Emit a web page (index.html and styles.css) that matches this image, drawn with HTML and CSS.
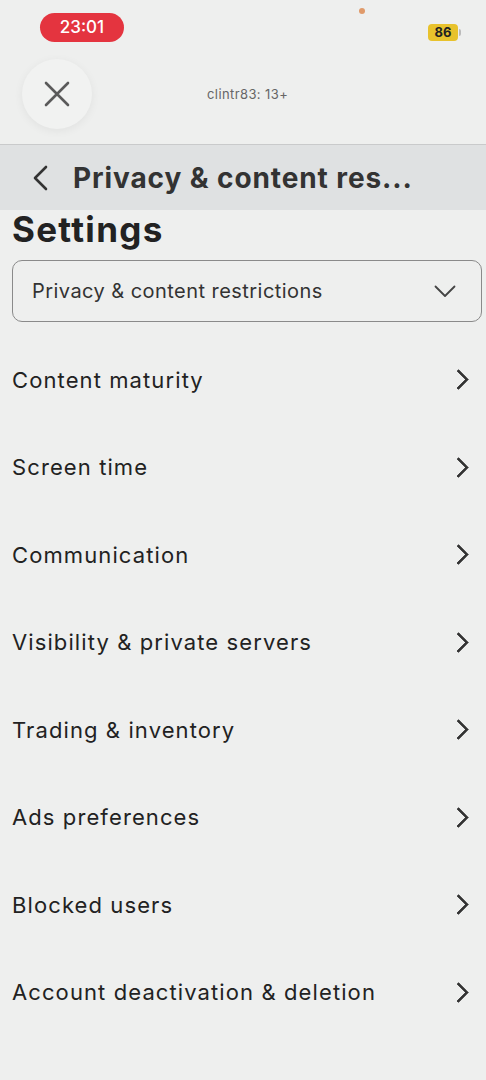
FILE: index.html
```html
<!DOCTYPE html>
<html lang="en">
<head>
  <meta charset="UTF-8">
  <meta name="viewport" content="width=device-width, initial-scale=1.0">
  <title>Settings</title>
  <link rel="stylesheet" href="styles.css">
</head>
<body>

  <div class="status">
    <span class="time">23:01</span>
    <span class="dot"></span>
    <span class="battery">86</span>
  </div>

  <div class="topbar">
    <button class="close" aria-label="Close">
      <svg width="28" height="28" viewBox="0 0 28 28"><path d="M3 3 L25 25 M25 3 L3 25" stroke="#5a5a5a" stroke-width="2.6" stroke-linecap="round" fill="none"/></svg>
    </button>
    <span class="user">clintr83: 13+</span>
  </div>

  <div class="header">
    <svg class="back" width="16" height="26" viewBox="0 0 16 26"><path d="M14 2 L3 13 L14 24" stroke="#333" stroke-width="2.6" stroke-linecap="round" stroke-linejoin="round" fill="none"/></svg>
    <h1>Privacy &amp; content res...</h1>
  </div>

  <h2 class="page-title">Settings</h2>

  <div class="dropdown">
    <span>Privacy &amp; content restrictions</span>
    <svg width="22" height="13" viewBox="0 0 22 13"><path d="M1.5 1.5 L11 11 L20.5 1.5" stroke="#444" stroke-width="1.8" stroke-linecap="round" stroke-linejoin="round" fill="none"/></svg>
  </div>

  <ul class="menu">
    <li>Content maturity</li>
    <li>Screen time</li>
    <li>Communication</li>
    <li>Visibility &amp; private servers</li>
    <li>Trading &amp; inventory</li>
    <li>Ads preferences</li>
    <li>Blocked users</li>
    <li>Account deactivation &amp; deletion</li>
  </ul>

</body>
</html>
```

FILE: styles.css
```css
body {
  font-family: Inter, "Noto Sans", sans-serif;
  background-color: #eeefee;
  color: #222;
  margin: 0;
  width: 486px;
  height: 1080px;
  overflow: hidden;
}

.status {
  height: 56px;
  display: flex;
  align-items: flex-start;
  padding: 13px 28px 0 40px;
  box-sizing: border-box;
  position: relative;
}

.time {
  background-color: #e4343f;
  color: #fff;
  font-size: 17px;
  font-weight: 500;
  width: 84px;
  height: 29px;
  line-height: 29px;
  text-align: center;
  border-radius: 15px;
}

.dot {
  position: absolute;
  left: 359px;
  top: 8px;
  width: 6px;
  height: 6px;
  border-radius: 50%;
  background-color: #e09a6a;
}

.battery {
  margin-left: auto;
  margin-top: 11px;
  background-color: #e8c22c;
  color: #222;
  font-size: 13px;
  font-weight: 700;
  width: 30px;
  height: 17px;
  line-height: 17px;
  text-align: center;
  border-radius: 4px;
  position: relative;
}

.battery::after {
  content: "";
  position: absolute;
  right: -3px;
  top: 5px;
  width: 2px;
  height: 7px;
  border-radius: 0 2px 2px 0;
  background-color: #bbb;
}

.topbar {
  height: 88px;
  display: flex;
  align-items: center;
  padding: 0 0 12px 22px;
  box-sizing: border-box;
}

.close {
  width: 70px;
  height: 70px;
  border-radius: 50%;
  border: none;
  background-color: #f1f2f1;
  box-shadow: 0 2px 10px rgba(0, 0, 0, 0.06);
  display: flex;
  align-items: center;
  justify-content: center;
  padding: 0;
}

.user {
  margin-left: 115px;
  font-size: 13px;
  letter-spacing: 0.4px;
  color: #666;
}

.header {
  height: 66px;
  border-top: 1px solid #c9cacb;
  background-color: #dfe1e2;
  display: flex;
  align-items: center;
  padding: 0 0 0 32px;
  box-sizing: border-box;
}

.header h1 {
  margin: 0 0 0 25px;
  font-size: 28px;
  font-weight: 700;
  color: #333;
  letter-spacing: 0.9px;
}

.page-title {
  margin: 0;
  padding: 0 12px;
  font-size: 35px;
  font-weight: 700;
  line-height: 38px;
  letter-spacing: 1.3px;
  color: #222;
}

.dropdown {
  margin: 12px 4px 0 12px;
  height: 62px;
  border: 1.5px solid #8a8a8a;
  border-radius: 10px;
  display: flex;
  align-items: center;
  justify-content: space-between;
  padding: 0 25px 0 19px;
  box-sizing: border-box;
  font-size: 20px;
  letter-spacing: 0.45px;
  color: #333;
}

.menu {
  list-style: none;
  margin: 0;
  padding: 14px 0 0 0;
}

.menu li {
  height: 87.5px;
  display: flex;
  align-items: center;
  justify-content: space-between;
  padding: 0 20px 0 12px;
  font-size: 22px;
  letter-spacing: 1.1px;
  color: #222;
}

.menu li::after {
  content: "";
  width: 12px;
  height: 12px;
  border-right: 3px solid #333;
  border-bottom: 3px solid #333;
  border-radius: 1px;
  transform: rotate(-45deg);
}
```
